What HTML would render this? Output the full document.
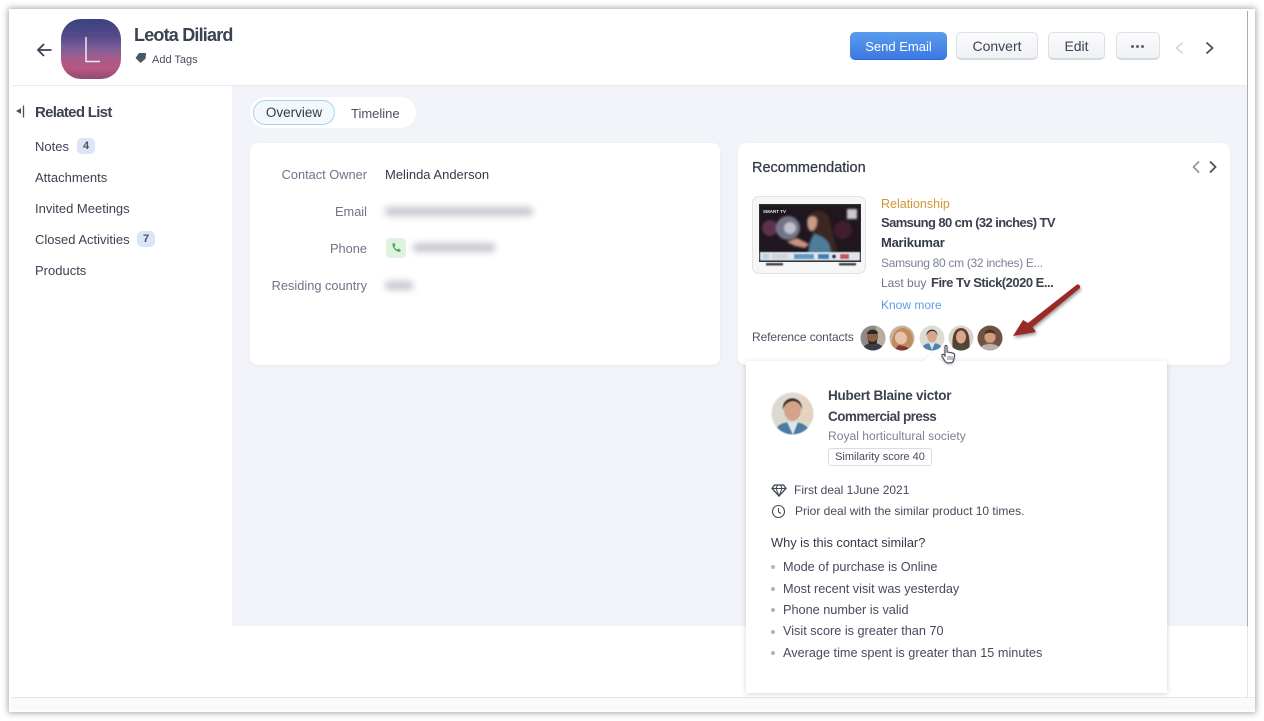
<!DOCTYPE html>
<html><head><meta charset="utf-8">
<style>
html,body{margin:0;padding:0;width:1264px;height:721px;overflow:hidden;background:#fff;font-family:"Liberation Sans",Arial,sans-serif;}
.a{position:absolute;white-space:nowrap;}
.t{position:absolute;white-space:nowrap;font-size:13px;line-height:18px;color:#3c4252;}
.lab{position:absolute;white-space:nowrap;font-size:12.800px;line-height:18px;color:#6d7488;text-align:right;right:897px;}
.li{position:absolute;left:783px;white-space:nowrap;font-size:12.700px;line-height:18px;color:#454b5c;}
.dot{position:absolute;left:771px;width:4px;height:4px;border-radius:50%;background:#aeb4c2;}
.btn{position:absolute;top:32px;height:28px;box-sizing:border-box;border:1px solid #dde0e6;border-bottom:2px solid #d5d9e0;border-radius:5px;background:linear-gradient(#fbfbfc,#eff1f5);text-align:center;font-size:14px;line-height:27px;color:#3c4252;}
.bl{position:absolute;filter:blur(3.500px);background:#c6c8cf;height:9px;border-radius:3px;}
.av{position:absolute;filter:blur(.35px);}
</style></head><body>
<div class="a" style="left:9px;top:9px;width:1246px;height:703px;background:#fff;box-shadow:0 0 6px 1px rgba(0,0,0,.35);"></div>
<div class="a" style="left:11px;top:697px;width:1244px;height:14px;background:#fafafa;border-top:1px solid #e6e6e6;box-sizing:border-box;"></div>
<div class="a" style="left:1247px;top:11px;width:1px;height:686px;background:#e4e4e4;"></div>
<div class="a" style="left:1247px;top:11px;width:1px;height:615px;background:#a9abb0;"></div>
<div class="a" style="left:12px;top:85px;width:1235px;height:1px;background:#e8eaee;"></div>
<div class="a" style="left:232px;top:86px;width:1015px;height:540px;background:#f1f3f8;"></div>

<svg class="a" style="left:36px;top:42px" width="17" height="16" viewBox="0 0 17 16"><path d="M15.500 8H2M8 2 2 8l6 6" fill="none" stroke="#39404f" stroke-width="1.800"/></svg>
<div class="a" style="left:61px;top:19px;width:60px;height:60px;border-radius:20px;background:linear-gradient(180deg,#38437f 0%,#574a8a 30%,#7a5f98 48%,#a45c8d 65%,#b8567f 82%,#8e4d72 100%);"></div>
<svg class="a" style="left:61px;top:19px" width="60" height="60"><path d="M25 18V42.500H39" fill="none" stroke="#f0e8f4" stroke-width="1.500"/></svg>
<div class="t" style="left:134px;top:24px;font-size:18px;line-height:22px;font-weight:bold;color:#3b4252;letter-spacing:-.8px;">Leota Diliard</div>
<svg class="a" style="left:134px;top:52px" width="13" height="12" viewBox="0 0 13 12"><path d="M5 1h6.500l.5.700-.5 5L6.500 11 1.500 6z" fill="#46596b"/></svg>
<div class="t" style="left:152px;top:51px;font-size:11px;color:#474d5c;">Add Tags</div>

<div class="btn" style="left:850px;width:97px;border:none;border-bottom:1px solid #2f6ad0;background:linear-gradient(#5a9dec,#3c78e3);color:#fff;line-height:29px;font-size:13px;font-weight:500;">Send Email</div>
<div class="btn" style="left:956px;width:82px;">Convert</div>
<div class="btn" style="left:1048px;width:57px;">Edit</div>
<div class="btn" style="left:1116px;width:44px;"></div>
<div class="a" style="left:1131px;top:45px;width:3px;height:3px;border-radius:50%;background:#5c6373;box-shadow:5px 0 #5c6373,10px 0 #5c6373;"></div>
<svg class="a" style="left:1174px;top:41px" width="11" height="14"><path d="M8.500 1.500 2.500 7l6 5.500" fill="none" stroke="#d2d6dc" stroke-width="1.600"/></svg>
<svg class="a" style="left:1204px;top:41px" width="11" height="14"><path d="M2.500 1.500 8.500 7l-6 5.500" fill="none" stroke="#46515f" stroke-width="1.800"/></svg>

<svg class="a" style="left:16px;top:105px" width="9" height="13"><path d="M4.500 4v4L1 6z" fill="#46515f" stroke="#46515f"/><path d="M7.500 0.500v12" stroke="#46515f" stroke-width="1.300"/></svg>
<div class="t" style="left:35px;top:104px;font-size:15px;font-weight:bold;letter-spacing:-.7px;">Related List</div>
<div class="t" style="left:35px;top:138px;">Notes</div>
<div class="a" style="left:77px;top:138px;width:18px;height:16px;border-radius:5px;background:#dbe4f8;text-align:center;font-size:11px;line-height:16px;font-weight:bold;color:#4a5060;">4</div>
<div class="t" style="left:35px;top:169px;">Attachments</div>
<div class="t" style="left:35px;top:200px;">Invited Meetings</div>
<div class="t" style="left:35px;top:231px;">Closed Activities</div>
<div class="a" style="left:137px;top:231px;width:18px;height:16px;border-radius:5px;background:#dbe4f8;text-align:center;font-size:11px;line-height:16px;font-weight:bold;color:#4a5060;">7</div>
<div class="t" style="left:35px;top:262px;">Products</div>

<div class="a" style="left:250px;top:97px;width:166px;height:31px;border-radius:16px;background:#fff;"></div>
<div class="a" style="left:253px;top:100px;width:82px;height:25px;box-sizing:border-box;border:1px solid #a9d1f2;border-radius:13px;background:#f3f8fd;text-align:center;font-size:13.500px;line-height:23px;color:#33394a;">Overview</div>
<div class="t" style="left:351px;top:105px;font-size:13px;color:#4a5061;">Timeline</div>

<div class="a" style="left:250px;top:143px;width:470px;height:222px;border-radius:8px;background:#fff;box-shadow:0 1px 3px rgba(40,50,80,.05);"></div>
<div class="lab" style="top:166px;">Contact Owner</div>
<div class="lab" style="top:203px;">Email</div>
<div class="lab" style="top:240px;">Phone</div>
<div class="lab" style="top:277px;">Residing country</div>
<div class="t" style="left:385px;top:166px;color:#343a4a;">Melinda Anderson</div>
<div class="bl" style="left:385px;top:207px;width:148px;"></div>
<div class="a" style="left:386px;top:238px;width:20px;height:20px;border-radius:4px;background:#e0f1df;"></div>
<svg class="a" style="left:390px;top:242px" width="12" height="12" viewBox="0 0 12 12"><path d="M2.500 1.500 4.500 1l1 2.500L4.300 4.700c.5 1.300 1.500 2.300 2.800 2.900L8.300 6.500l2.500 1.200-.6 2.200c-4.200.4-8.300-4-7.700-8.400z" fill="#55a85a"/></svg>
<div class="bl" style="left:413px;top:243px;width:82px;"></div>
<div class="bl" style="left:385px;top:281px;width:28px;"></div>

<div class="a" style="left:738px;top:143px;width:492px;height:222px;border-radius:8px;background:#fff;box-shadow:0 1px 3px rgba(40,50,80,.05);"></div>
<div class="t" style="left:752px;top:159px;font-size:14.500px;color:#343a4a;-webkit-text-stroke:.25px #343a4a;">Recommendation</div>
<svg class="a" style="left:1191px;top:160px" width="10" height="14"><path d="M8 1.500 2.500 7 8 12.500" fill="none" stroke="#8a93a0" stroke-width="1.600"/></svg>
<svg class="a" style="left:1208px;top:160px" width="10" height="14"><path d="M2 1.500 7.500 7 2 12.500" fill="none" stroke="#46515f" stroke-width="1.800"/></svg>

<div class="a" style="left:752px;top:196px;width:114px;height:78px;box-sizing:border-box;border:1px solid #e2e2e2;border-radius:7px;background:#f6f6f6;"></div>
<svg class="a" style="left:758px;top:204px" width="104" height="65" viewBox="0 0 104 65">
<defs><filter id="b1"><feGaussianBlur stdDeviation="1"/></filter><filter id="b2"><feGaussianBlur stdDeviation=".4"/></filter></defs>
<rect x="1" y="0" width="102" height="58" fill="#2c2c30"/>
<rect x="2" y="1.500" width="100" height="55" fill="#20161f"/>
<g filter="url(#b1)"><circle cx="12" cy="24" r="8" fill="#6a3a58" opacity=".8"/><circle cx="85" cy="26" r="9" fill="#4a2030" opacity=".8"/><circle cx="30" cy="24" r="12" fill="#8f93a8" opacity=".75"/><circle cx="32" cy="24" r="6" fill="#d6dbe6" opacity=".75"/><path d="M50 12c6-8 18-7 21 2 2 9 6 22 8 35H52c2-10 6-14 0-26z" fill="#3a2820"/><path d="M50 14c4-3 9-2 9 3 0 6-3 10-6 10s-5-8-3-13z" fill="#c99a85"/><path d="M56 30c6 1 14 5 16 13l1 6H50c1-8 2-14 6-19z" fill="#4d7d9a"/><path d="M29 38l10-4 12 6-4 4-10-2z" fill="#c7937d"/><rect x="89" y="5" width="10" height="10" fill="#c9c9c9"/></g>
<g filter="url(#b2)"><rect x="2" y="48" width="100" height="8.500" fill="#dce4ec"/>
<rect x="5" y="50" width="6" height="5" fill="#bfd0de"/><rect x="14" y="50" width="16" height="5" fill="#d3d3dc"/><rect x="36" y="50" width="20" height="5" fill="#5f9ac8"/><rect x="60" y="50" width="11" height="5" fill="#3f7fb8"/><circle cx="76" cy="52.500" r="2" fill="#333"/><rect x="82" y="50" width="9" height="5" fill="#c7575a"/>
<rect x="8" y="59" width="17" height="2.500" fill="#444"/><rect x="81" y="59" width="17" height="2.500" fill="#444"/></g>
<text x="5" y="9" font-size="4.500" font-weight="bold" fill="#e8e8e8" font-family="Liberation Sans">SMART TV</text>
</svg>

<div class="t" style="left:881px;top:195px;color:#cf9736;font-size:12.500px;">Relationship</div>
<div class="t" style="left:881px;top:214px;font-weight:bold;color:#3a4050;letter-spacing:-.6px;">Samsung 80 cm (32 inches) TV</div>
<div class="t" style="left:881px;top:234px;font-weight:bold;color:#343a4a;letter-spacing:-.25px;">Marikumar</div>
<div class="t" style="left:881px;top:254px;color:#7b8297;font-size:12px;letter-spacing:-.3px;">Samsung 80 cm (32 inches) E...</div>
<div class="t" style="left:881px;top:274px;color:#6d7488;font-size:12px;">Last buy</div>
<div class="t" style="left:931px;top:274px;font-weight:bold;color:#3a4050;letter-spacing:-.5px;">Fire Tv Stick(2020 E...</div>
<div class="t" style="left:881px;top:296px;color:#5f9bf0;font-size:12px;">Know more</div>
<div class="t" style="left:752px;top:328px;font-size:12px;letter-spacing:-.1px;color:#4c5263;">Reference contacts</div>

<svg class="av" style="left:860px;top:325px" width="26" height="26" viewBox="0 0 26 26"><defs><clipPath id="c"><circle cx="13" cy="13" r="12.500"/></clipPath></defs><g clip-path="url(#c)"><rect width="26" height="26" fill="#8d8a88"/><rect x="16" width="10" height="26" fill="#b5aca2"/><path d="M2 26c1-6 6-8 11-8s10 2 11 8z" fill="#3a3d47"/><ellipse cx="12.500" cy="11" rx="5.500" ry="7" fill="#8b6249"/><path d="M7 9c0-5 10-6 11-1l-1 1H8z" fill="#2e2825"/><path d="M7.500 13c1 5 9 5 10 0l-1 6H9z" fill="#2c2522"/></g></svg>
<svg class="av" style="left:889px;top:325px" width="26" height="26" viewBox="0 0 26 26"><g clip-path="url(#c)"><rect width="26" height="26" fill="#c9b2a0"/><path d="M4 26c-3-10 0-22 9-23 8 0 11 6 11 13l-3 10z" fill="#bd8d5d"/><ellipse cx="12" cy="13" rx="6" ry="6.500" fill="#e8c1aa" transform="rotate(-15 12 13)"/><path d="M4 26l6-6 8 2 3 4z" fill="#803634"/></g></svg>
<svg class="av" style="left:919px;top:325px" width="26" height="26" viewBox="0 0 26 26"><g clip-path="url(#c)"><rect width="26" height="26" fill="#dcdcd4"/><path d="M2 26c1-6 5-8 11-8s10 2 11 8z" fill="#4c82ad"/><path d="M10 18h6l-3 7z" fill="#dce4ea"/><ellipse cx="13" cy="11" rx="5" ry="6.500" fill="#d3a78d"/><path d="M7.500 11C6.500 3 19 2 18.500 11c-1-4-3-5-5-5s-5 1-6 5z" fill="#3e3029"/></g></svg>
<svg class="av" style="left:948px;top:325px" width="26" height="26" viewBox="0 0 26 26"><g clip-path="url(#c)"><rect width="26" height="26" fill="#d9d4cd"/><path d="M5 26C3 12 6 3 13 3s10 9 8 23z" fill="#5a4032"/><ellipse cx="13" cy="12" rx="5" ry="6.500" fill="#d8a88c"/><path d="M7 26c1-5 3-7 6-7s5 2 6 7z" fill="#4a4a40"/></g></svg>
<svg class="av" style="left:977px;top:325px" width="26" height="26" viewBox="0 0 26 26"><g clip-path="url(#c)"><rect width="26" height="26" fill="#6e5342"/><path d="M2 26c1-5 5-7 11-7s10 2 11 7z" fill="#b5b2ae"/><ellipse cx="13" cy="12" rx="5.500" ry="7" fill="#d19f7f"/><path d="M7.500 10c0-7 11-7 11 0-2-3-9-3-11 0z" fill="#4b2f20"/><path d="M8 14c1 5 9 5 10 0l-1 5H9z" fill="#8b5f40"/></g></svg>

<svg class="a" style="left:1008px;top:279px;filter:drop-shadow(1px 2px 1.500px rgba(0,0,0,.4))" width="78" height="64" viewBox="0 0 78 64"><path d="M5 57 15 41l5 3L69 5.500c2-.5 3.500 1.500 3 3.500L26 47l-1.500 1L28 53z" fill="#9a2a26"/></svg>

<div class="a" style="left:746px;top:361px;width:421px;height:332px;background:#fff;box-shadow:0 1px 5px rgba(30,35,50,.2);"></div>
<div class="a" style="left:926px;top:355px;width:12px;height:12px;background:#fff;transform:rotate(45deg);box-shadow:-1px -1px 2px rgba(30,35,50,.06);"></div>
<svg class="a" style="left:940px;top:344px;filter:drop-shadow(0 1px 1px rgba(0,0,0,.3))" width="17" height="20" viewBox="0 0 17 20"><path d="M5 2c1-1 2-.5 2 .5V8l5 .800c2 .5 3 1.500 2.500 3.500l-1 4c-.5 1.500-1.500 2.500-3 2.500H8c-1.500 0-2.500-1-3.500-2.500L2 12c-.5-1 .5-2 1.500-1.500L5 12z" fill="#fff" stroke="#454a55" stroke-width="1.100"/><path d="M8 12v4M10 12v4M12 12v4" stroke="#454a55" stroke-width=".7"/></svg>

<svg class="a" style="left:771px;top:392px;filter:blur(.4px)" width="43" height="43" viewBox="0 0 43 43"><defs><clipPath id="c2"><circle cx="21.500" cy="21.500" r="21"/></clipPath></defs><g clip-path="url(#c2)"><rect width="43" height="43" fill="#dcdad0"/><rect x="30" width="13" height="30" fill="#e4d3c0"/><path d="M3 43c1-10 9-13 18-13s17 3 19 13z" fill="#4b7ba4"/><path d="M16 30h11l-5 13z" fill="#dde6ee"/><ellipse cx="21.500" cy="18" rx="8.500" ry="11" fill="#d3a48a"/><path d="M12 18C10 3 32 2 31 18c-1-6-5-9-9-9s-9 3-10 9z" fill="#3e3029"/></g></svg>

<div class="t" style="left:828px;top:387px;font-size:13.500px;font-weight:bold;letter-spacing:-.25px;">Hubert Blaine victor</div>
<div class="t" style="left:828px;top:408px;font-size:13.500px;font-weight:bold;letter-spacing:-.55px;">Commercial press</div>
<div class="t" style="left:828px;top:427px;font-size:12.100px;color:#7b8297;">Royal horticultural society</div>
<div class="a" style="left:828px;top:448px;width:104px;height:18px;box-sizing:border-box;border:1px solid #dadce2;border-radius:3px;text-align:center;font-size:11px;line-height:16px;color:#464c5c;">Similarity score 40</div>

<svg class="a" style="left:771px;top:484px" width="16" height="13" viewBox="0 0 16 13"><path d="M3.500 1h9L15 4.500 8 12 1 4.500z" fill="none" stroke="#3f4656" stroke-width="1.300"/><path d="M1 4.500h14M5 4.500 8 12l3-7.500M5 4.500 6.500 1M11 4.500 9.500 1" fill="none" stroke="#3f4656" stroke-width="1"/></svg>
<div class="t" style="left:794px;top:481px;font-size:12px;color:#454b5c;">First deal 1June 2021</div>
<svg class="a" style="left:771px;top:504px" width="15" height="15" viewBox="0 0 15 15"><circle cx="7.500" cy="7.500" r="6" fill="none" stroke="#3f4656" stroke-width="1.100"/><path d="M7.500 4v4l2.500 1.500" fill="none" stroke="#3f4656" stroke-width="1.100"/></svg>
<div class="t" style="left:795px;top:502px;font-size:12px;color:#454b5c;">Prior deal with the similar product 10 times.</div>
<div class="t" style="left:771px;top:534px;font-size:12.800px;color:#343a4a;">Why is this contact similar?</div>
<div class="dot" style="top:565px"></div><div class="li" style="top:558px">Mode of purchase is Online</div>
<div class="dot" style="top:587px"></div><div class="li" style="top:580px">Most recent visit was yesterday</div>
<div class="dot" style="top:608px"></div><div class="li" style="top:601px">Phone number is valid</div>
<div class="dot" style="top:630px"></div><div class="li" style="top:622px">Visit score is greater than 70</div>
<div class="dot" style="top:651px"></div><div class="li" style="top:644px">Average time spent is greater than 15 minutes</div>
</body></html>
